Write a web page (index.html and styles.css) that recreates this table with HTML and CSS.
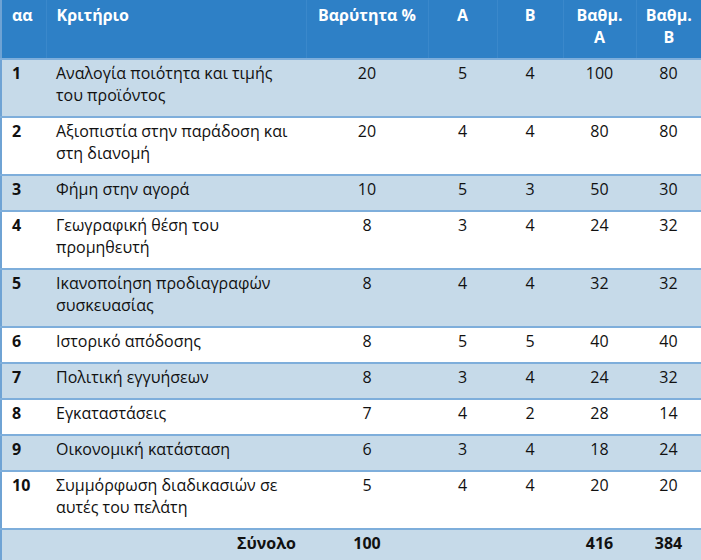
FILE: index.html
```html
<!DOCTYPE html>
<html lang="el">
<head>
<meta charset="utf-8">
<title>Κριτήρια</title>
<link rel="stylesheet" href="styles.css">
</head>
<body>
<table class="grid">
  <colgroup>
    <col class="c0"><col class="c1"><col class="c2"><col class="c3"><col class="c4"><col class="c5"><col class="c6">
  </colgroup>
  <thead>
    <tr class="head">
      <th class="left">αα</th>
      <th class="left">Κριτήριο</th>
      <th>Βαρύτητα %</th>
      <th>Α</th>
      <th>Β</th>
      <th>Βαθμ.<br>Α</th>
      <th>Βαθμ.<br>Β</th>
    </tr>
  </thead>
  <tbody>
    <tr class="shade"><td class="num">1</td><td class="text">Αναλογία ποιότητα και τιμής<br>του προϊόντος</td><td>20</td><td>5</td><td>4</td><td>100</td><td>80</td></tr>
    <tr><td class="num">2</td><td class="text">Αξιοπιστία στην παράδοση και<br>στη διανομή</td><td>20</td><td>4</td><td>4</td><td>80</td><td>80</td></tr>
    <tr class="shade"><td class="num">3</td><td class="text">Φήμη στην αγορά</td><td>10</td><td>5</td><td>3</td><td>50</td><td>30</td></tr>
    <tr><td class="num">4</td><td class="text">Γεωγραφική θέση του<br>προμηθευτή</td><td>8</td><td>3</td><td>4</td><td>24</td><td>32</td></tr>
    <tr class="shade"><td class="num">5</td><td class="text">Ικανοποίηση προδιαγραφών<br>συσκευασίας</td><td>8</td><td>4</td><td>4</td><td>32</td><td>32</td></tr>
    <tr><td class="num">6</td><td class="text">Ιστορικό απόδοσης</td><td>8</td><td>5</td><td>5</td><td>40</td><td>40</td></tr>
    <tr class="shade"><td class="num">7</td><td class="text">Πολιτική εγγυήσεων</td><td>8</td><td>3</td><td>4</td><td>24</td><td>32</td></tr>
    <tr><td class="num">8</td><td class="text">Εγκαταστάσεις</td><td>7</td><td>4</td><td>2</td><td>28</td><td>14</td></tr>
    <tr class="shade"><td class="num">9</td><td class="text">Οικονομική κατάσταση</td><td>6</td><td>3</td><td>4</td><td>18</td><td>24</td></tr>
    <tr><td class="num">10</td><td class="text">Συμμόρφωση διαδικασιών σε<br>αυτές του πελάτη</td><td>5</td><td>4</td><td>4</td><td>20</td><td>20</td></tr>
    <tr class="shade total"><td></td><td class="sum">Σύνολο</td><td>100</td><td></td><td></td><td>416</td><td>384</td></tr>
  </tbody>
</table>
</body>
</html>
```

FILE: styles.css
```css
html, body {
  margin: 0;
  padding: 0;
  background: #ffffff;
}
body {
  font-family: "Open Sans", "Noto Sans", sans-serif;
  font-size: 16px;
  color: #111111;
}
.grid {
  width: 701px;
  border-collapse: collapse;
  table-layout: fixed;
  border-left: 2px solid #6fa3d4;
  border-right: 2px solid #a9c8e4;
}
.c0 { width: 45px; }
.c1 { width: 260px; }
.c2 { width: 122px; }
.c3 { width: 69px; }
.c4 { width: 66px; }
.c5 { width: 73px; }
.c6 { width: 66px; }

.grid th, .grid td {
  padding: 2px 6px 10px;
  line-height: 22px;
  text-align: center;
  vertical-align: top;
}
.grid th {
  background: #2e80c6;
  color: #ffffff;
  font-weight: 700;
  height: 44px;
  padding-top: 4px;
  padding-bottom: 10px;
  border-right: 1px solid #3a88cb;
}
.grid th:last-child { border-right: none; }
.grid th.left { text-align: left; padding-left: 10px; }

.grid tbody tr {
  border-top: 2px solid #7eaedb;
}
.grid tbody tr.shade td {
  background: #c6dae9;
}
.grid td.num {
  text-align: left;
  padding-left: 10px;
  font-weight: 700;
}
.grid td.text {
  text-align: left;
  padding-left: 10px;
}
.grid tr.total td {
  font-weight: 700;
  height: 25px;
}
.grid td.sum {
  text-align: right;
  padding-right: 10px;
}
```
